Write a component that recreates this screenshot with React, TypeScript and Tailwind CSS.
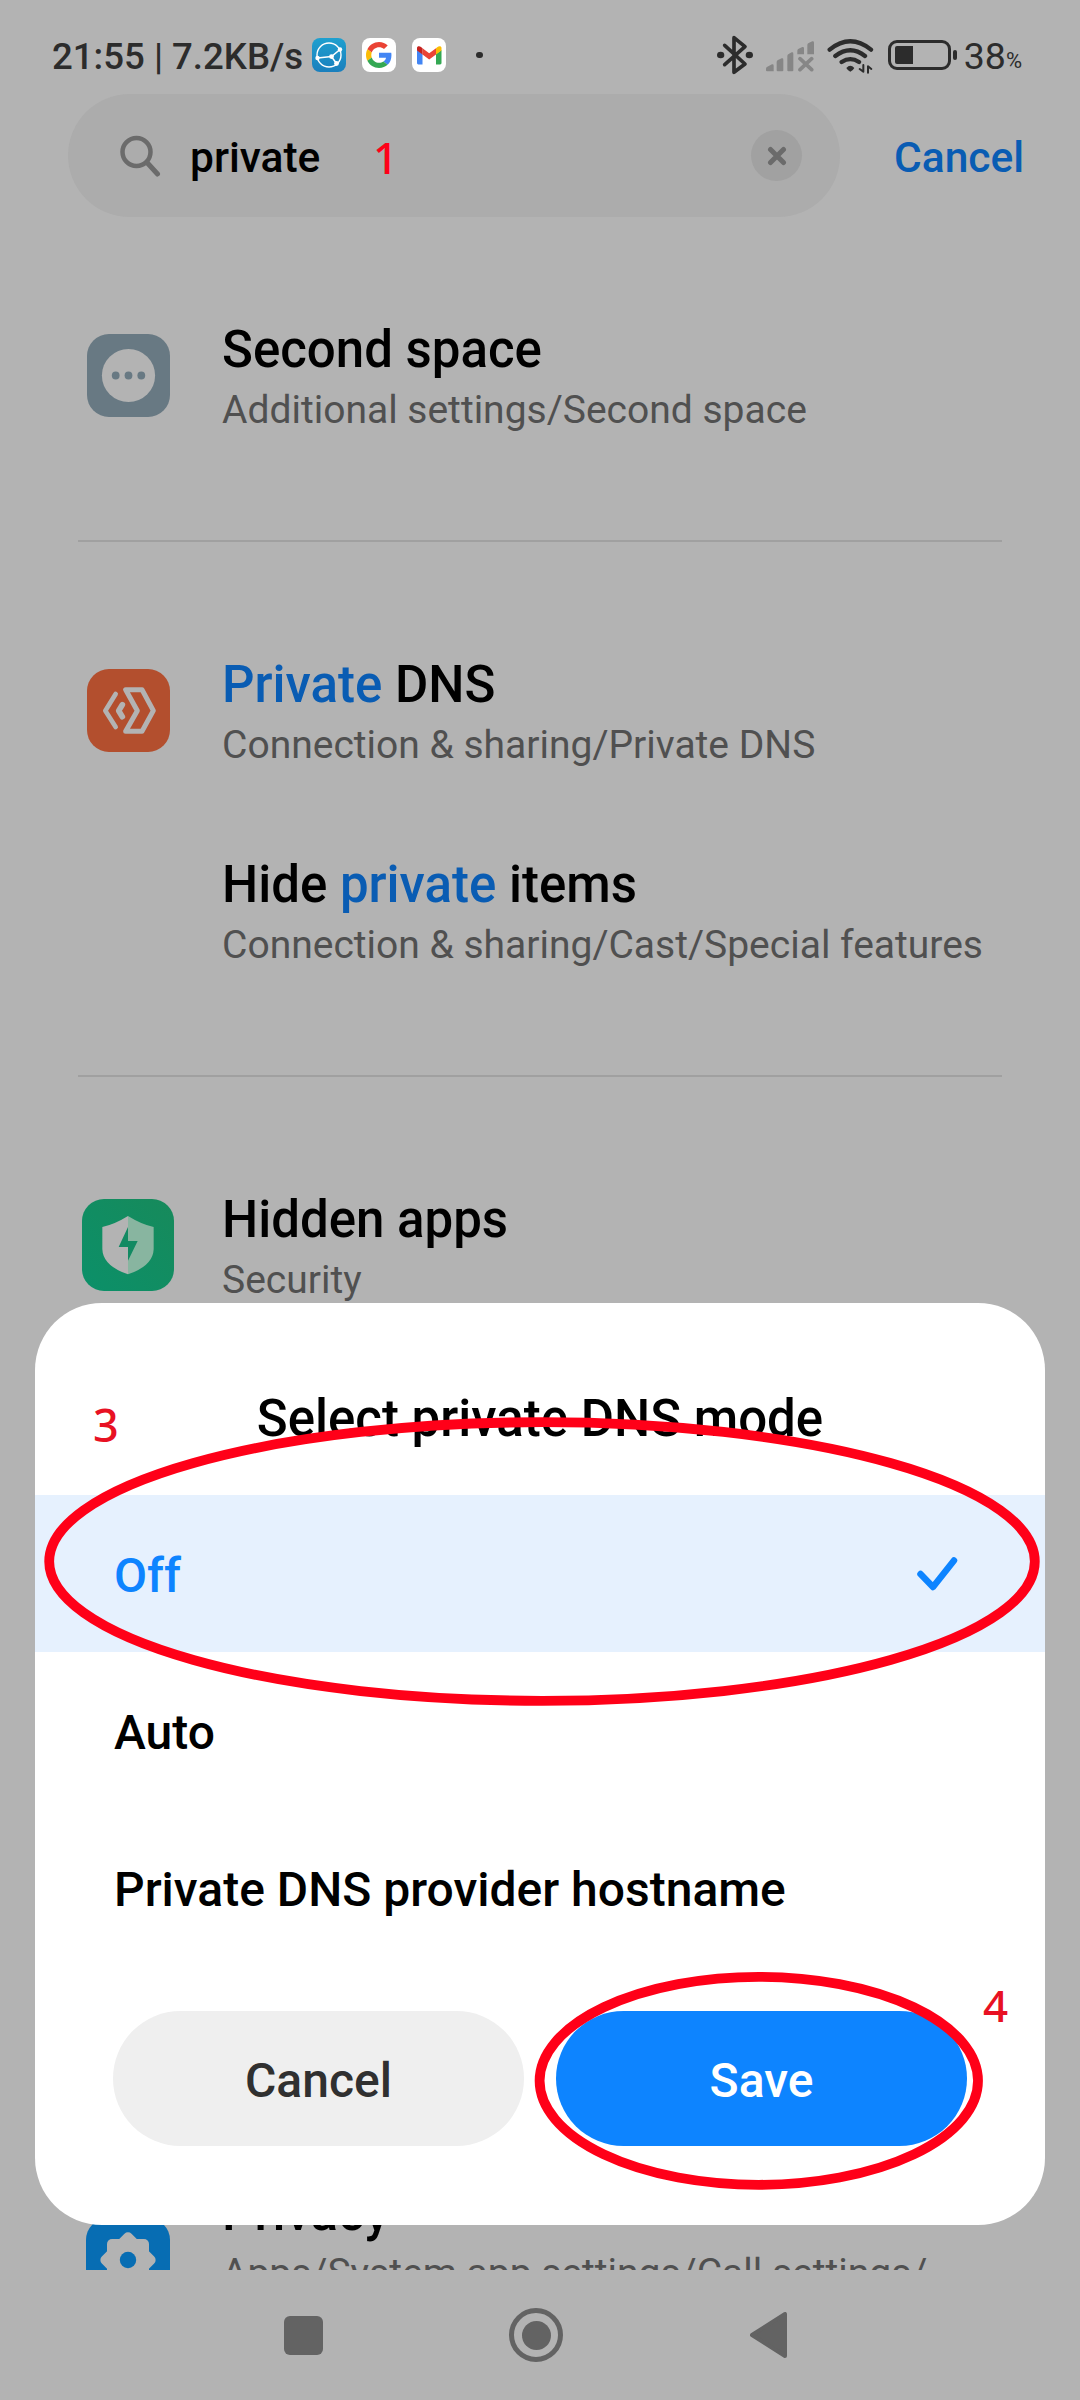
import type { ReactNode } from "react";

function StatusBar() {
  return (
    <header className="flex h-[94px] shrink-0 items-center pt-[16px] pl-[52px] pr-[58px] text-[#2c2c2c]">
      <span className="mt-[5px] w-[260px] shrink-0 text-[36.6px] leading-none font-medium whitespace-nowrap">21:55 | 7.2KB/s</span>
      <svg className="size-[34px] shrink-0" viewBox="0 0 34 34">
        <defs>
          <linearGradient id="sync" x1="0" y1="0" x2="0" y2="1">
            <stop offset="0" stopColor="#1fa0cf" />
            <stop offset="1" stopColor="#1a7fbd" />
          </linearGradient>
        </defs>
        <rect width="34" height="34" rx="8" fill="url(#sync)" />
        <g fill="none" stroke="#fff" strokeWidth="1.4">
          <circle cx="17" cy="17" r="12" />
          <path d="M5.5 20 L19.5 18.6 L28 11.5 M19.5 18.6 L24.5 25.5" strokeWidth="1.6" />
        </g>
        <g fill="#fff">
          <circle cx="5.5" cy="20" r="2.2" />
          <circle cx="19.5" cy="18.6" r="2.4" />
          <circle cx="28" cy="11.5" r="2.2" />
          <circle cx="24.5" cy="25.5" r="2.4" />
        </g>
      </svg>
      <svg className="ml-[16px] size-[34px] shrink-0" viewBox="0 0 34 34">
        <rect width="34" height="34" rx="8" fill="#fff" />
        <g transform="translate(4 4) scale(0.542)">
          <path fill="#ea4335" d="M24 9.5c3.54 0 6.71 1.22 9.21 3.6l6.85-6.85C35.9 2.38 30.47 0 24 0 14.62 0 6.51 5.38 2.56 13.22l7.98 6.19C12.43 13.72 17.74 9.5 24 9.5z" />
          <path fill="#4285f4" d="M46.98 24.55c0-1.57-.15-3.09-.38-4.55H24v9.02h12.94c-.58 2.96-2.26 5.48-4.78 7.18l7.73 6c4.51-4.18 7.09-10.36 7.09-17.65z" />
          <path fill="#fbbc05" d="M10.53 28.59c-.48-1.45-.76-2.99-.76-4.59s.27-3.14.76-4.59l-7.98-6.19C.92 16.46 0 20.12 0 24c0 3.88.92 7.54 2.56 10.78l7.97-6.19z" />
          <path fill="#34a853" d="M24 48c6.48 0 11.93-2.13 15.89-5.81l-7.73-6c-2.15 1.45-4.92 2.3-8.16 2.3-6.26 0-11.57-4.22-13.47-9.91l-7.98 6.19C6.51 42.62 14.62 48 24 48z" />
        </g>
      </svg>
      <svg className="ml-[16px] size-[34px] shrink-0" viewBox="0 0 34 34">
        <rect width="34" height="34" rx="8" fill="#fff" />
        <path fill="#4285f4" d="M5 12v13c0 .9.6 1.4 1.4 1.4H10.500V16z" />
        <path fill="#34a853" d="M29.500 12v13c0 .9-.6 1.400-1.400 1.400H24V16z" />
        <path fill="#ea4335" d="M10.500 10.200v6.300l6.700 5 6.800-5v-6.300l-6.800 5.100z" />
        <path fill="#c5221f" d="M5 10v2.600l5.500 4V10.200L9.300 9.200C7.500 7.800 5 8 5 10z" />
        <path fill="#fbbc04" d="M29.500 10v2.600l-5.500 4V10.200l1.200-1c1.800-1.400 4.300-1.200 4.300.8z" />
      </svg>
      <span className="ml-[30px] size-[6.5px] shrink-0 rounded-full bg-[#2c2c2c]" />

      <div className="ml-auto flex items-center">
        <svg className="h-[40px] w-[36px]" viewBox="51 44 108 120" fill="none" stroke="#2c2c2c" strokeWidth="11" strokeLinejoin="round" strokeLinecap="round">
          <path d="M74 75L135 131L102 156V52L135 79L74 133" />
          <ellipse cx="62" cy="104" rx="11" ry="10" fill="#2c2c2c" stroke="none" />
          <ellipse cx="148" cy="104" rx="11" ry="10" fill="#2c2c2c" stroke="none" />
        </svg>
        <svg className="ml-[13px] h-[40px] w-[48px]" viewBox="198 44 144 120" fill="#868686">
          <path d="M201 153q-3 0-3-3v-5q0-4 4-6l14-7q5-1 5 4v17zM233 153q-3 0-3-3v-25q0-4 4-6l11-5q5-1 5 4v32q0 3-3 3zM265 153q-3 0-3-3v-43q0-4 4-6l9-5q5-1 5 4v50q0 3-3 3zM292 102v-11q0-4 4-6l11-5q5-1 5 4v18zM322 102v-28q0-4 4-6l11-5q5-1 5 4v35z" />
          <path d="M300 115L335 148M335 115L300 148" stroke="#868686" strokeWidth="11" strokeLinecap="round" />
        </svg>
        <svg className="ml-[13px] h-[40px] w-[47px]" viewBox="380 44 141 120" fill="none" stroke="#2c2c2c" strokeWidth="13" strokeLinecap="round">
          <path d="M388 88Q450 38 512 88M405 107Q450 72 494 107M424 125Q450 108 476 125" />
          <path d="M438 143q12-14 24 0q-5 9-12 11q-7-2-12-11z" fill="#2c2c2c" stroke="none" />
          <path d="M489 134V154L478 146M503 157V138L513 146" strokeWidth="6" strokeLinejoin="round" />
        </svg>
        <div className="ml-[14px] flex h-[30px] w-[63px] items-center rounded-[9px] border-[3px] border-[#2c2c2c] pl-[4px]">
          <span className="h-[18px] w-[18px] rounded-l-[2px] bg-[#2c2c2c]" />
        </div>
        <span className="ml-[2px] h-[10px] w-[4px] rounded-[2px] bg-[#2c2c2c]" />
        <span className="mt-[3px] ml-[7px] text-[37.5px] leading-none">38</span>
        <span className="mt-[12px] text-[22px] leading-none">%</span>
      </div>
    </header>
  );
}

function SearchRow() {
  return (
    <div className="flex h-[123px] shrink-0 items-center pl-[68px]">
      <div className="flex h-full w-[772px] items-center rounded-full bg-[#acacac] pr-[38px] pl-[52px]">
        <svg className="size-[42px]" viewBox="0 0 42 42" fill="none" stroke="#6b6b6b">
          <circle cx="16.500" cy="17" r="14" strokeWidth="4.500" />
          <path d="M27 27.500L37.500 39" strokeWidth="5" strokeLinecap="round" />
        </svg>
        <span className="mt-[4px] ml-[28px] text-[42.5px] leading-[60px] font-medium text-black">private</span>
        <span className="ml-auto flex size-[51px] items-center justify-center rounded-full bg-[#a1a1a1]">
          <svg className="size-[20px]" viewBox="0 0 20 20" fill="none" stroke="#6b6b6b" strokeWidth="5" strokeLinecap="round">
            <path d="M3.500 3.500L16.500 16.500M16.500 3.500L3.500 16.500" />
          </svg>
        </span>
      </div>
      <span className="mt-[4px] ml-[54px] text-[42.5px] leading-[60px] font-medium text-[#095cb3]">Cancel</span>
    </div>
  );
}

function Item({ icon, title, path, tall }: { icon?: ReactNode; title: ReactNode; path: string; tall?: boolean }) {
  return (
    <div className={tall ? "flex h-[244px] pr-[60px]" : "flex h-[200px]"}>
      <div className="flex w-[222px] shrink-0 items-center pl-[34px]">
        <div className="flex w-[188px] justify-center">{icon}</div>
      </div>
      <div className="pt-[45px] whitespace-nowrap">
        <div className="text-[51px] leading-[60px] font-medium text-black">{title}</div>
        <div className="mt-[4px] text-[39px] leading-[52px] text-[#505050]">{path}</div>
      </div>
    </div>
  );
}

function Mark({ children }: { children: ReactNode }) {
  return <span className="text-[#095cb3]">{children}</span>;
}

const SecondSpaceIcon = () => (
  <svg className="size-[83px]" viewBox="0 0 83 83">
    <rect width="83" height="83" rx="22" fill="#687983" />
    <circle cx="41.500" cy="41.500" r="26.600" fill="#b3b3b3" />
    <g fill="#687983">
      <circle cx="28.700" cy="41.500" r="3.900" />
      <circle cx="41.500" cy="41.500" r="3.900" />
      <circle cx="54.300" cy="41.500" r="3.900" />
    </g>
  </svg>
);

const ConnectionIcon = () => (
  <svg className="size-[83px]" viewBox="81 84 249 249">
    <rect x="81" y="84" width="249" height="249" rx="66" fill="#b34f2e" />
    <g fill="none" stroke="#b3b3b3" strokeLinecap="round" strokeLinejoin="round" strokeWidth="14">
      <path d="M167 159L136 209L167 258" />
      <path d="M187 191L176 209L187 227" strokeWidth="17" />
      <path d="M197 146H246L280 209L246 271H197L232 209Z" strokeWidth="15" />
    </g>
  </svg>
);

const SecurityIcon = () => (
  <svg className="size-[92px]" viewBox="66 114 276 276">
    <defs>
      <linearGradient id="sec" x1="0" y1="1" x2="1" y2="0">
        <stop offset="0" stopColor="#0b9069" />
        <stop offset="1" stopColor="#178a5b" />
      </linearGradient>
    </defs>
    <rect x="66" y="114" width="276" height="276" rx="66" fill="url(#sec)" />
    <path d="M204 165Q164 190 127 198V265Q129 315 204 340Z" fill="#b3b3b3" />
    <path d="M204 165Q244 190 281 198V265Q279 315 204 340Z" fill="#88b5a0" />
    <path d="M204 198L176 258H204V299L233 240H204Z" fill="#128a62" />
  </svg>
);

const PrivacyIcon = () => (
  <svg className="size-[84px]" viewBox="0 0 84 84">
    <rect width="84" height="84" rx="22" fill="#076db3" />
    <rect x="21" y="21" width="42" height="42" rx="5" fill="#b3b3b3" />
    <rect x="21" y="21" width="42" height="42" rx="5" fill="#b3b3b3" transform="rotate(45 42 42)" />
    <circle cx="42" cy="42" r="8.200" fill="#076db3" />
  </svg>
);

const Divider = () => <div className="mt-[65px] mr-[78px] mb-[68px] ml-[78px] h-[2px] bg-[#a0a0a0]" />;

function NavBar() {
  return (
    <nav className="flex h-[130px] shrink-0 items-center pl-[284px]">
      <span className="size-[39px] rounded-[6px] bg-[#636363]" />
      <span className="ml-[186px] flex size-[54px] items-center justify-center rounded-full border-[5px] border-[#636363]">
        <span className="size-[29px] rounded-full bg-[#636363]" />
      </span>
      <svg className="ml-[187px] h-[46px] w-[37px]" viewBox="0 0 37 46">
        <path d="M2 23L35 2V44Z" fill="#636363" stroke="#636363" strokeWidth="4" strokeLinejoin="round" />
      </svg>
    </nav>
  );
}

function Dialog() {
  return (
    <section className="absolute top-[1303px] left-[35px] flex h-[922px] w-[1010px] flex-col overflow-hidden rounded-[67px] bg-white text-[48px] font-medium text-black">
      <h2 className="h-[192px] pt-[85px] text-center text-[51px] leading-[62px]">Select private DNS mode</h2>
      <div className="flex h-[157px] items-center justify-between bg-[#e6f1fe] pr-[87px] pl-[79px] text-[#0d84ff]">
        <span className="mt-[4px]">Off</span>
        <svg className="h-[34px] w-[42px]" viewBox="0 0 42 34" fill="none" stroke="#0d84ff" strokeWidth="6.500" strokeLinecap="round" strokeLinejoin="round">
          <path d="M4.500 17L17 30L38 3.500" />
        </svg>
      </div>
      <div className="flex h-[157px] items-center pt-[4px] pl-[79px]">Auto</div>
      <div className="flex h-[157px] items-center pt-[4px] pl-[79px]">Private DNS provider hostname</div>
      <div className="mt-[45px] flex gap-[32px] px-[78px]">
        <button className="h-[135px] flex-1 rounded-full bg-[#efefef] pt-[4px] text-[#303030]">Cancel</button>
        <button className="h-[135px] flex-1 rounded-full bg-[#0d84ff] pt-[4px] text-white">Save</button>
      </div>
    </section>
  );
}

function Annotations() {
  return (
    <div className="pointer-events-none absolute inset-0 font-['Noto_Sans'] leading-none">
      <svg className="absolute inset-0 h-full w-full" viewBox="0 0 1080 2400" fill="none" stroke="#ff0018" strokeWidth="9.800">
        <ellipse cx="542" cy="1561.500" rx="492.800" ry="139.300" />
        <ellipse cx="758.800" cy="2080.800" rx="219.200" ry="104" />
      </svg>
      <span className="absolute top-[135px] left-[373px] text-[44px] font-medium text-[#ff0018]">1</span>
      <span className="absolute top-[1402px] left-[93px] text-[45px] font-medium text-[#e81123]">3</span>
      <span className="absolute top-[1983px] left-[983px] text-[44px] font-medium text-[#e81123]">4</span>
    </div>
  );
}

export default function App() {
  return (
    <div className="relative flex h-[2400px] w-[1080px] flex-col overflow-hidden bg-[#b3b3b3] font-['Roboto',sans-serif]">
      <StatusBar />
      <SearchRow />
      <main className="h-[2053px] shrink-0 overflow-hidden pt-[58px]">
        <Item icon={<SecondSpaceIcon />} title="Second space" path="Additional settings/Second space" />
        <Divider />
        <Item icon={<ConnectionIcon />} title={<><Mark>Private</Mark> DNS</>} path="Connection & sharing/Private DNS" />
        <Item title={<>Hide <Mark>private</Mark> items</>} path="Connection & sharing/Cast/Special features" />
        <Divider />
        <Item icon={<SecurityIcon />} title="Hidden apps" path="Security" />
        <div className="mt-[793px]">
          <Item tall icon={<PrivacyIcon />} title="Privacy" path="Apps/System app settings/Call settings/" />
        </div>
      </main>
      <NavBar />
      <Dialog />
      <Annotations />
    </div>
  );
}
